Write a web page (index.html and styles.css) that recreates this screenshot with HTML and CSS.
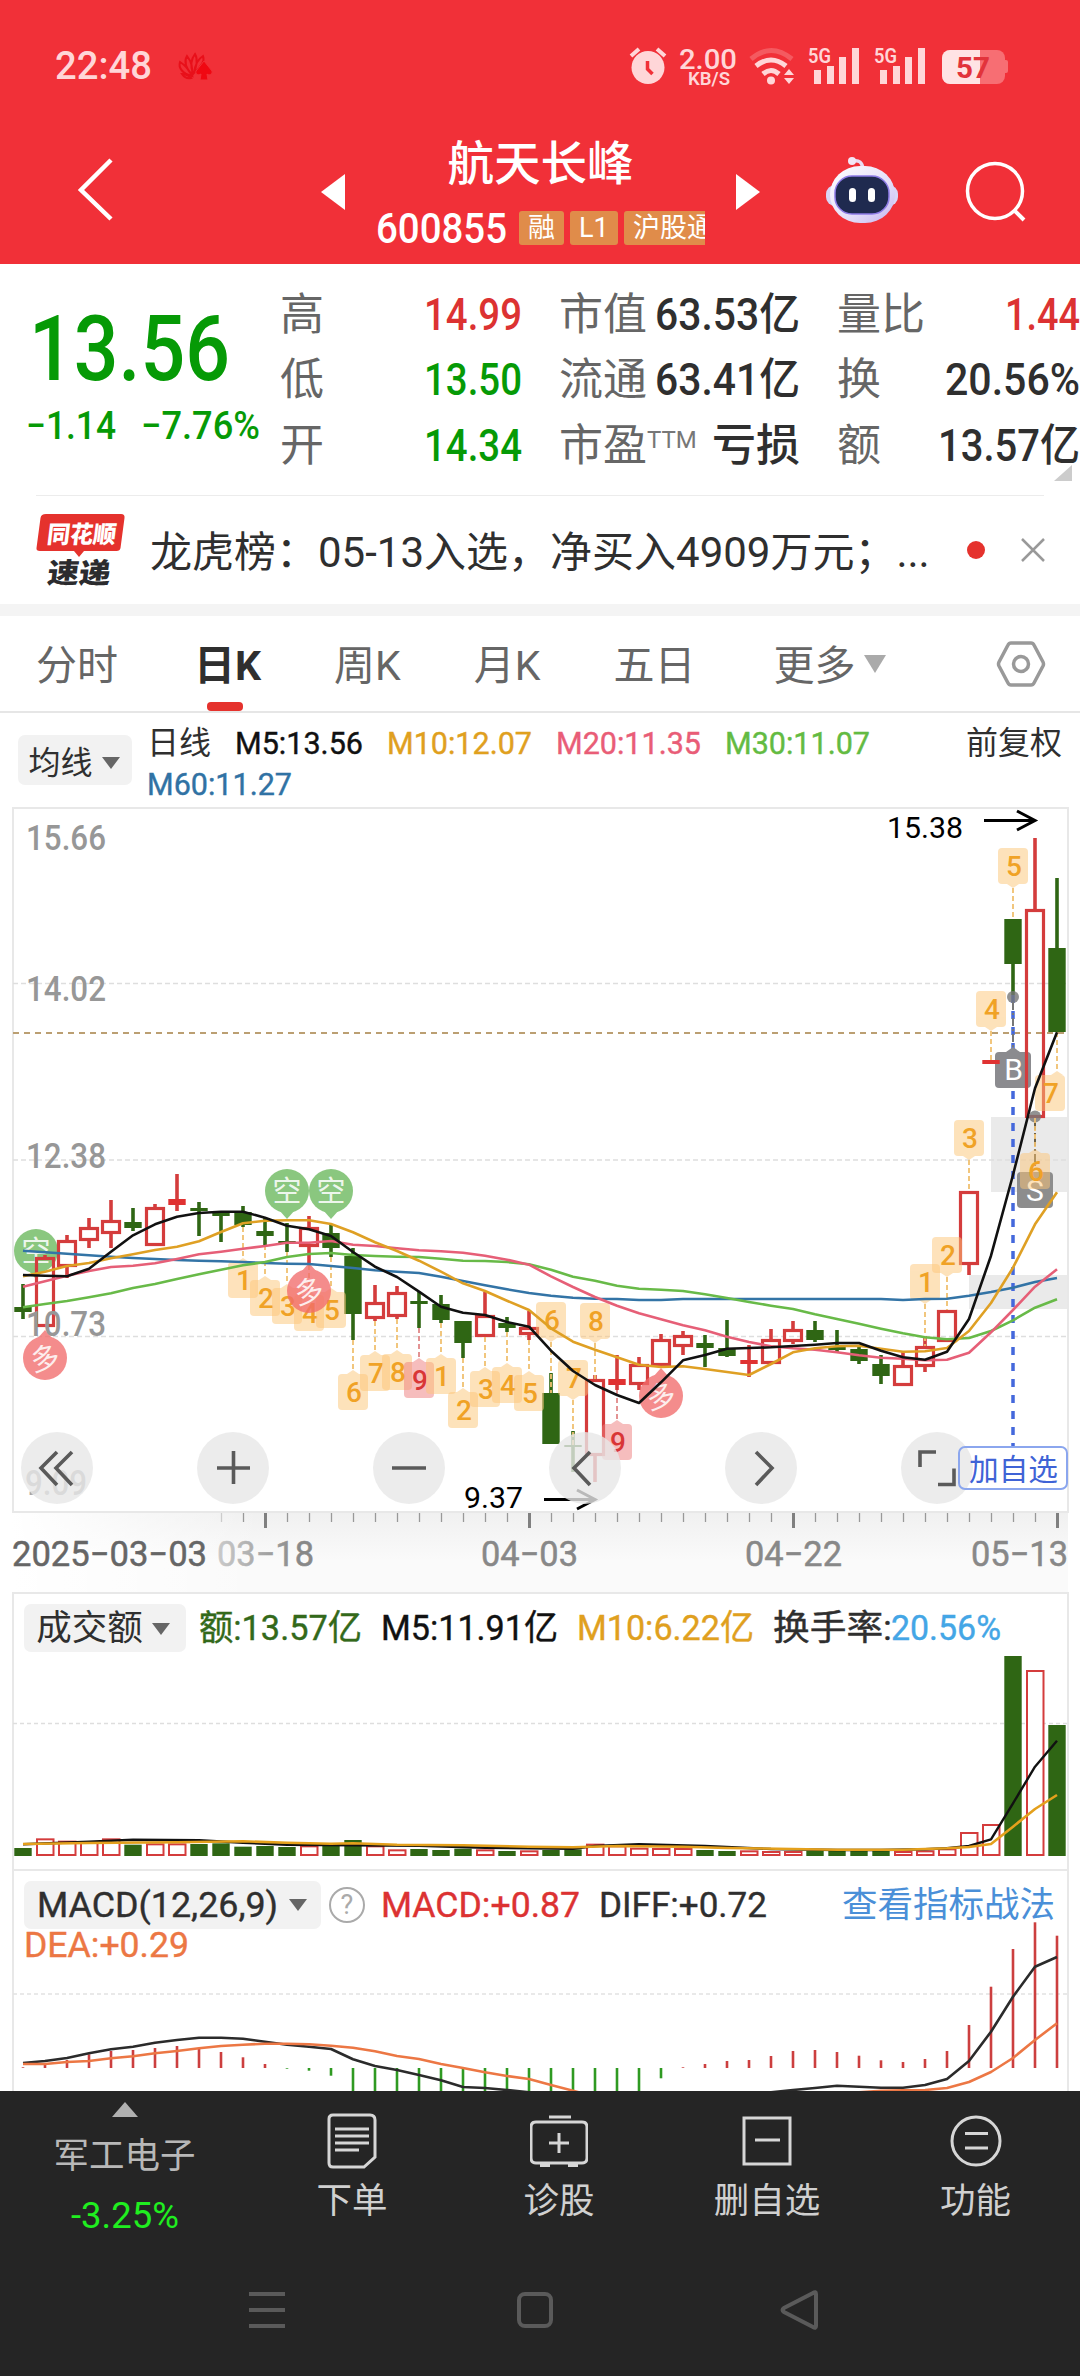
FILE: index.html
```html
<!DOCTYPE html>
<html lang="zh-CN">
<head>
<meta charset="utf-8">
<title>航天长峰 600855</title>
<link rel="stylesheet" href="styles.css">
</head>
<body>
<header class="header">
  <div class="status">
    <span class="n time" data-w="97">22:48</span>
    <svg class="brand" width="36" height="30" viewBox="0 0 36 30"><g fill="none" stroke="#e8101a" stroke-width="2"><path d="M15 25C6 23 1 17 3 11c5 3 9 8 12 14zM15 24C8 16 7 10 10 5c4 5 6 11 5 19zM16 23c-3-9-2-15 2-20 3 5 2 13-2 20zM17 22c1-8 4-14 9-17 2 5-2 11-9 17z"/><path d="M14 27c-4 1-7-1-9-4 4 0 6 1 9 4z"/></g><path d="M27 10l8 10c1 3-3 5-5 3l1 6h-8l1-6c-3 2-6 0-5-3z" fill="#f00812" stroke="#f13038"/></svg>
    <svg class="sys" width="400" height="44" viewBox="620 42 400 44">
      <g fill="#ffd6d8" stroke="none">
        <circle cx="648" cy="65.500" r="16.500"/>
        <path d="M647.500 59v8l5 5" fill="none" stroke="#f13038" stroke-width="3.500"/>
        <path d="M631 54l8-7M665 54l-8-7" stroke="#ffd6d8" stroke-width="4"/>
        <text x="679" y="67" font-size="28" font-weight="500" textLength="58" lengthAdjust="spacingAndGlyphs">2.00</text>
        <text x="688" y="83" font-size="19" font-weight="600" textLength="42" lengthAdjust="spacingAndGlyphs">KB/S</text>
        <g fill="none" stroke="#ffd6d8" stroke-width="5">
          <path d="M751 57q20-17 41 0" opacity=".25"/><path d="M756 64q15-12 30 0"/><path d="M763 72q8-7 16 0"/>
        </g>
        <circle cx="771" cy="78.500" r="4"/><path d="M789 67l5 6h-10zM789 82l5-6h-10z"/>
        <text x="808" y="61" font-size="21" font-weight="600" textLength="23" lengthAdjust="spacingAndGlyphs">5G</text>
        <path d="M814 68h7v14h-7zM827 64h7v18h-7zM839 55h7v27h-7zM852 46h7v36h-7z"/>
        <text x="874" y="61" font-size="21" font-weight="600" textLength="23" lengthAdjust="spacingAndGlyphs">5G</text>
        <path d="M880 68h7v14h-7zM893 64h7v18h-7zM905 55h7v27h-7zM918 46h7v36h-7z"/>
      </g>
      <rect x="942" y="48" width="63" height="34" rx="8" fill="#f76e73"/><rect x="1003" y="58" width="5" height="13" rx="2" fill="#f76e73"/>
      <path d="M950 48h30v34h-30a8 8 0 0 1-8-8V56a8 8 0 0 1 8-8z" fill="#ffe3e4"/>
      <text x="956" y="76" font-size="29" font-weight="700" fill="#e2333b" textLength="34" lengthAdjust="spacingAndGlyphs">57</text>
    </svg>
  </div>
  <div class="titlebar">
    <svg class="back" width="40" height="66" viewBox="0 0 40 66"><path d="M34 3L4 33l30 29" fill="none" stroke="#fff" stroke-width="4.500"/></svg>
    <svg width="24" height="36" viewBox="0 0 24 36"><path d="M24 0v36L0 18z" fill="#fff"/></svg>
    <div class="stock">
      <h1>航天长峰</h1>
      <div class="codes"><span class="n code" data-w="131">600855</span><em>融</em><em>L1</em><em>沪股通</em></div>
    </div>
    <svg width="24" height="36" viewBox="0 0 24 36"><path d="M0 0v36l24-18z" fill="#fff"/></svg>
    <svg class="robot" width="74" height="68" viewBox="824 155 74 68">
      <defs><linearGradient id="skin" x2="1" y2="1"><stop offset="0" stop-color="#fff"/><stop offset=".6" stop-color="#e4def8"/><stop offset="1" stop-color="#c4b4f0"/></linearGradient></defs>
      <path d="M852 160q9-2 10 8" fill="none" stroke="#e9dcf3" stroke-width="3.500"/><circle cx="851" cy="160" r="4" fill="#f3e6f6"/>
      <rect x="825" y="184" width="72" height="21" rx="9" fill="#d9d5f6"/>
      <rect x="829" y="165" width="65" height="57" rx="30" fill="url(#skin)"/>
      <rect x="834" y="175" width="54" height="38" rx="17" fill="#1f2a4f" stroke="#8d7be6" stroke-width="1.500"/>
      <rect x="848" y="187" width="7" height="14" rx="3.500" fill="#fff"/><rect x="867" y="187" width="7" height="14" rx="3.500" fill="#fff"/>
    </svg>
    <svg width="62" height="62" viewBox="0 0 62 62"><circle cx="30" cy="30" r="27.500" fill="none" stroke="#fff" stroke-width="3.500"/><path d="M49 49l10 10" stroke="#fff" stroke-width="4"/></svg>
  </div>
</header>

<section class="quote">
  <div class="price">
    <span class="n last" data-w="201">13.56</span>
    <div class="chg"><span class="n" data-w="90">−1.14</span><span class="n" data-w="119">−7.76%</span></div>
  </div>
  <dl class="c1">
    <dt>高</dt><dd class="red"><span class="n" data-w="98">14.99</span></dd>
    <dt>低</dt><dd class="green"><span class="n" data-w="98">13.50</span></dd>
    <dt>开</dt><dd class="green"><span class="n" data-w="98">14.34</span></dd>
  </dl>
  <dl class="c2">
    <dt>市值</dt><dd><span class="n" data-w="145">63.53亿</span></dd>
    <dt>流通</dt><dd><span class="n" data-w="145">63.41亿</span></dd>
    <dt>市盈<sup>TTM</sup></dt><dd>亏损</dd>
  </dl>
  <dl class="c3">
    <dt>量比</dt><dd class="red"><span class="n" data-w="75">1.44</span></dd>
    <dt>换</dt><dd><span class="n" data-w="135">20.56%</span></dd>
    <dt>额</dt><dd><span class="n" data-w="142">13.57亿</span></dd>
  </dl>
  <i class="corner"></i>
</section>

<section class="news">
  <svg width="90" height="76" viewBox="36 512 90 76">
    <path d="M46 514h75q4 0 3.500 4l-4 30q-.5 3-4 3H84l-5 6-5-6H40q-4 0-3.500-3l4-30q.5-4 5.500-4z" fill="#e5322d"/>
    <g transform="skewX(-7)" font-weight="900"><text x="113" y="543" font-size="24" fill="#fff" textLength="69" lengthAdjust="spacingAndGlyphs">同花顺</text>
    <text x="118" y="583" font-size="28" fill="#2b2b2e" textLength="63" lengthAdjust="spacingAndGlyphs">速递</text></g>
  </svg>
  <p>龙虎榜：05-13入选，净买入4909万元；<span>...</span></p>
  <i class="dot"></i>
  <svg width="26" height="26" viewBox="0 0 26 26"><path d="M2 2l22 22M24 2L2 24" stroke="#999" stroke-width="2.500"/></svg>
</section>

<nav class="tabs">
  <span>分时</span><span class="on">日K</span><span>周K</span><span>月K</span><span>五日</span><span class="more">更多<i class="tri"></i></span>
  <svg width="50" height="48" viewBox="0 0 50 48"><path d="M15 3h20q2 0 3 2l9 17q1 2 0 4l-9 17q-1 2-3 2H15q-2 0-3-2L3 26q-1-2 0-4l9-17q1-2 3-2z" fill="none" stroke="#999" stroke-width="3.500"/><circle cx="25" cy="24" r="7.500" fill="none" stroke="#999" stroke-width="3.500"/></svg>
</nav>

<section class="ma">
  <button class="pick">均线<i class="tri"></i></button>
  <div class="legend">
    <span>日线</span><span class="n k" data-w="128">M5:13.56</span><span class="n y" data-w="145">M10:12.07</span><span class="n p" data-w="145">M20:11.35</span><span class="n g" data-w="145">M30:11.07</span><span class="n b" data-w="145">M60:11.27</span>
  </div>
  <span class="adj">前复权</span>
</section>

<svg id="kline" width="1080" height="786" viewBox="0 806 1080 786"></svg>

<section class="panel volume">
  <svg id="volume" width="1080" height="277" viewBox="0 1592 1080 277"></svg>
  <div class="legend">
    <button class="pick">成交额<i class="tri"></i></button>
    <span class="n dg" data-w="163">额:13.57亿</span><span class="n k" data-w="177">M5:11.91亿</span><span class="n y" data-w="177">M10:6.22亿</span><span class="n" data-w="119">换手率:</span><span class="n sky" data-w="110">20.56%</span>
  </div>
</section>

<section class="panel macd">
  <svg id="macd" width="1080" height="222" viewBox="0 1869 1080 222"></svg>
  <div class="legend">
    <button class="pick"><span class="n" data-w="241">MACD(12,26,9)</span><i class="tri"></i></button>
    <i class="help">?</i>
    <span class="n red" data-w="199">MACD:+0.87</span><span class="n" data-w="168">DIFF:+0.72</span><a>查看指标战法</a><span class="n o" data-w="165">DEA:+0.29</span>
  </div>
</section>

<footer>
  <div class="nav">
    <div class="sector"><i class="up"></i><span>军工电子</span><b class="n" data-w="108">-3.25%</b></div>
    <div><svg width="50" height="56" viewBox="0 0 50 56"><path d="M6 2h37q5 0 5 5v37l-11 10H6q-4 0-4-4V6q0-4 4-4zM8 16h34M8 23h34M8 30h34M8 37h24"/></svg><span>下单</span></div>
    <div><svg width="58" height="56" viewBox="0 0 58 56"><path d="M6 9h46q5 0 5 5v31q0 5-5 5H6q-5 0-5-5V14q0-5 5-5zM19 4h22M29 20v20M19 30h20M10 52.500h10M38 52.500h10"/></svg><span>诊股</span></div>
    <div><svg width="50" height="56" viewBox="0 0 50 56"><path d="M2 5h46v46H2zM13 27h25"/></svg><span>删自选</span></div>
    <div><svg width="52" height="56" viewBox="0 0 52 56"><circle cx="26" cy="28" r="24"/><path d="M15 20.500h23M15 35h23"/></svg><span>功能</span></div>
  </div>
  <div class="keys">
    <svg width="36" height="36" viewBox="0 0 36 36"><path d="M0 2h36M0 18h36M0 34h36"/></svg>
    <svg width="36" height="36" viewBox="0 0 36 36"><rect x="2" y="2" width="32" height="32" rx="6"/></svg>
    <svg width="38" height="40" viewBox="0 0 38 40"><path d="M36 4v32q0 3-3 1L4 22q-3-2 0-4L33 3q3-2 3 1z"/></svg>
  </div>
</footer>
<script src="charts.js"></script>
</body>
</html>
```
FILE: styles.css
```css
* { box-sizing: border-box; }
body { margin: 0; width: 1080px; height: 2376px; overflow: hidden; background: #fff; color: #2f2f2f;
  font-family: Roboto, "Noto Sans CJK SC", sans-serif; }
svg { display: block; flex: none; }
i, em { font-style: normal; }
button { border: 0; padding: 0; font: inherit; color: inherit; }
.n { display: inline-block; flex: none; white-space: nowrap; transform-origin: 0 50%; font-weight: 500; }
.red { color: #dc3232; } .green { color: #069a06; }
.k { color: #111; } .y { color: #e0a01e; } .p { color: #e95d77; } .g { color: #63bb42; }
.b { color: #3072a4; } .dg { color: #33691a; } .sky { color: #44a6e6; } .o { color: #ec7744; }

.header { height: 264px; background: #f13038; color: #fff; }
.status { height: 130px; padding: 2px 60px 0 55px; display: flex; align-items: center; }
.time { font-size: 38px; color: #ffd6d8; }
.brand { margin-left: 25px; }
.sys { margin-left: auto; }
.titlebar { height: 134px; display: grid; align-items: center;
  grid-template-columns: 244px 55px 360px 89px 140px 62px; grid-template-rows: 124px; padding: 0 0 0 77px; }
.back { margin-bottom: 5px; }
.robot { margin-bottom: 4px; }
.stock { width: 329px; overflow: hidden; height: 134px; padding-top: 11px; align-self: start; }
.stock h1 { margin: 0; font-size: 46.500px; line-height: 46px; font-weight: 500; text-align: center; height: 68px; }
.codes { display: flex; align-items: center; height: 38px; width: 380px; }
.code { font-size: 42px; margin-right: 12px; }
.codes em { height: 34px; line-height: 34px; margin-right: 6px; padding: 0 9px; border-radius: 3px; background: #e08c4a; font-size: 27px; }
.codes em:nth-of-type(2) { width: 48px; }

.quote { height: 232px; margin: 0 0 0 26px; display: grid; grid-template-columns: 254px 279px 278px 243px; position: relative; }
.quote::after { content: ""; position: absolute; left: 10px; right: 36px; bottom: 0; height: 1px; background: #ececec; }
.price { color: #069a06; padding-top: 37px; }
.last { font-size: 91px; line-height: 96px; margin-left: 3px; }
.chg { display: flex; gap: 25px; font-size: 39px; line-height: 56px; padding-top: 1px; }
.quote dl { margin: 0; padding-top: 18px; display: grid; grid-template-columns: 88px 1fr; grid-auto-rows: 65.300px; line-height: 66px; font-size: 44px; }
.quote dt { color: #666; white-space: nowrap; }
.quote dd { margin: 0; text-align: right; font-weight: 500; display: flex; justify-content: flex-end; white-space: nowrap; }
.c1 { width: 242px; } .c2 { width: 241px; } .c3 { width: 243px; }
.quote sup { font-size: 24px; vertical-align: 13px; line-height: 0; color: #777; }
.corner { position: absolute; right: 8px; bottom: 15px; border: solid transparent; border-width: 0 0 16px 18px; border-bottom-color: #ccc; }

.news { height: 108px; padding: 0 34px 0 36px; display: flex; align-items: center; }
.news p { margin: 0 0 4px 24px; font-size: 42px; white-space: nowrap; width: 800px; }
.dot { width: 18px; height: 18px; border-radius: 9px; background: #e5322d; margin: 0 auto 0 17px; }

.tabs { height: 109px; border-top: 12px solid #f4f4f4; border-bottom: 2px solid #e6e6e6; padding: 0 34px 0 36px; display: flex; align-items: center; font-size: 41px; color: #666; }
.tabs span { height: 95px; line-height: 100px; margin-right: 73px; white-space: nowrap; }
.tabs .on { color: #2f2f2f; font-weight: 700; position: relative; margin-left: 3px; }
.on::after { content: ""; position: absolute; left: 13px; bottom: 0; width: 36px; height: 9px; border-radius: 4px; background: #e5322d; }
.tri { display: inline-block; border: solid transparent; border-width: 12px 9px 0; border-top-color: #666; margin-left: 10px; vertical-align: 5px; }
.tabs .more { margin-left: 5px; margin-right: auto; }
.more .tri { border-width: 18px 11px 0; border-top-color: #aaa; vertical-align: 7px; margin-left: 8px; }

.ma { height: 93px; padding: 10px 18px 0 18px; display: flex; align-items: flex-start; font-size: 32px; }
.pick { background: #f2f2f2; border-radius: 7px; white-space: nowrap; flex: none; }
.ma .pick { width: 114px; height: 50px; margin-top: 12px; padding-right: 2px; }
.ma .pick .tri { margin-left: 9px; }
.ma .legend { display: flex; flex-wrap: wrap; width: 760px; margin-left: 15px; column-gap: 24px; line-height: 41px; }
.legend .n { font-weight: 400; -webkit-text-stroke: .4px currentColor; }
.adj { margin-left: auto; line-height: 41px; }

.panel { display: grid; }
.panel > * { grid-area: 1 / 1; }
.panel .legend { display: flex; flex-wrap: wrap; align-content: flex-start; padding: 12px 25px 0 24px; font-size: 35.500px; line-height: 48px; }
.panel .pick { height: 48px; line-height: 48px; padding: 0 12px; }
.volume .pick { width: 162px; margin-right: 13px; }
.panel.volume .pick { padding: 0 14px 0 10px; }
.volume .pick .tri { margin-left: 9px; }
.volume .n { margin-right: 19px; }
.volume .n:nth-of-type(4) { margin-right: -1px; }
.macd .pick { width: 297px; display: flex; align-items: center; }
.macd .pick .tri { margin-left: 12px; }
.macd .n { margin-right: 19px; }
.macd .pick .n { margin-right: 0; }
.macd .o { line-height: 32px; }
.macd a { color: #4a8fd8; margin-left: auto; }
.help { width: 36px; height: 36px; line-height: 32px; margin: 6px 16px 0 8px; border: 2px solid #aaa; border-radius: 50%; color: #aaa; font-size: 27px; text-align: center; }

footer { height: 285px; background: #252525; color: #d0d0d0; font-size: 35.500px; }
.nav { display: grid; grid-template-columns: 249px 206px 208px 208px 209px; height: 160px; }
.nav > div { display: flex; flex-direction: column; align-items: center; padding-top: 22px; white-space: nowrap; }
.nav svg { fill: none; stroke: #d6d6d6; stroke-width: 3; }
.nav span { margin-top: 11px; line-height: 42px; }
.nav .sector { padding-top: 11px; color: #b8b8b8; }
.sector .up { border: solid transparent; border-width: 0 13px 15px; border-bottom-color: #b0b0b0; }
.nav .sector span { margin-top: 18px; }
.sector b.n { color: #20ee20; font-weight: 400; margin-top: 18px; line-height: 42px; font-size: 36px; }
.keys { display: flex; padding: 39px 0 0 249px; align-items: center; }
.keys svg { margin-right: 230px; fill: none; stroke: #5a5a5a; stroke-width: 4; }
.keys svg:first-child { margin-right: 232px; }
.keys svg:nth-child(2) { margin-right: 227px; }

svg text { font-family: Roboto, "Noto Sans CJK SC", sans-serif; }
```
FILE: charts.js
```js
// Squeeze numerals to the narrow width used by the quote face.
document.querySelectorAll('.n').forEach(function (el) {
  var w = +el.dataset.w, natural = el.getBoundingClientRect().width;
  el.style.transform = 'scaleX(' + (w / natural).toFixed(4) + ')';
  el.style.width = w + 'px';
});

var RED = '#d43c3c', GREEN = '#2f6614';
function X(i) { return 23 + 22 * i; }
function line(x1, y1, x2, y2, c, w, more) {
  return '<path d="M' + x1 + ' ' + y1 + 'L' + x2 + ' ' + y2 + '" fill="none" stroke="' + c + '" stroke-width="' + w + '" ' + (more || '') + '/>';
}
function rect(x, y, w, h, fill, more) {
  return '<rect x="' + x + '" y="' + y + '" width="' + w + '" height="' + h + '" fill="' + fill + '" ' + (more || '') + '/>';
}
function text(s, x, y, size, w, fill, more) {
  return '<text x="' + x + '" y="' + y + '" font-size="' + size + '" textLength="' + w + '" lengthAdjust="spacingAndGlyphs" fill="' + fill + '" ' + (more || '') + '>' + s + '</text>';
}
// Series points are in thirds of a pixel below a base line.
function curve(base, pts, c, w) {
  var d = pts.map(function (p, k) { return (k ? 'L' : 'M') + X(p[0]) + ' ' + (base + p[1] / 3).toFixed(1); }).join('');
  return '<path d="' + d + '" fill="none" stroke="' + c + '" stroke-width="' + w + '" stroke-linejoin="round"/>';
}
function seq(a, from) { return a.map(function (v, k) { return [k + (from || 0), v]; }); }

// [type, high, top, bottom, low]; s = solid red
var C = [
  ['g',1284,1307,1312,1319],['r',1255,1257,1327,1327],['r',1235,1240,1267,1278],['r',1218,1227,1241,1248],['r',1200,1220,1234,1248],
  ['g',1208,1222,1228,1231],['r',1204,1207,1246,1246],['s',1174,1199,1205,1211],['g',1202,1208,1211,1236],['g',1212,1213,1216,1242],
  ['g',1206,1212,1225,1227],['g',1218,1231,1236,1245],['g',1223,1241,1243,1252],['r',1216,1227,1247,1265],['g',1225,1233,1248,1257],
  ['g',1248,1256,1314,1340],['r',1285,1302,1319,1321],['r',1286,1292,1317,1319],['g',1292,1301,1304,1328],['g',1295,1304,1320,1323],
  ['g',1321,1321,1343,1358],['r',1292,1315,1337,1337],['g',1317,1323,1328,1332],['r',1311,1327,1335,1340],['g',1373,1393,1444,1444],
  ['g',1431,1445,1447,1472],['r',1375,1379,1456,1482],['s',1355,1379,1385,1390],['r',1357,1364,1385,1390],['r',1334,1339,1366,1366],
  ['r',1331,1335,1347,1355],['g',1335,1343,1348,1367],['g',1320,1348,1356,1357],['s',1345,1360,1364,1377],['r',1329,1339,1364,1364],
  ['r',1321,1329,1342,1344],['g',1321,1330,1340,1342],['g',1330,1346,1350,1353],['g',1347,1349,1361,1364],['g',1355,1364,1376,1384],
  ['r',1352,1365,1386,1386],['r',1336,1346,1367,1372],['r',1310,1310,1342,1342],['r',1191,1191,1265,1275],['s',1060,1060,1064,1064],
  ['g',919,919,964,995],['r',838,909,1118,1118],['g',878,948,1032,1032]
];
function tag(i, tip, up, s, hot, dx) {
  var x = X(i) + (dx || 0), t = X(i), top = up ? tip + 4 : tip - 40, c = hot ? '#d93636' : '#f0a226', bg = hot ? '#ee7d7d' : '#fdc678';
  var e = up ? top : top + 36, k = up ? -4 : 4;
  var edge = up ? C[i][4] : C[i][2];
  return line(t, up ? edge : tip, t, up ? tip : edge, hot ? '#e08888' : '#f0c070', 1.8, 'stroke-dasharray="5 3"') +
    '<g fill="' + bg + '" opacity=".5">' + rect(x - 15, top, 30, 36, bg, 'rx="4"') + '<path d="M' + (t - 6) + ' ' + e + 'l6 ' + k + 'l6 ' + -k + 'z"/></g>' +
    '<text x="' + (x + 1) + '" y="' + (top + 28) + '" font-size="28" font-weight="500" text-anchor="middle" fill="' + c + '">' + s + '</text>';
}
function pin(x, y, s, fill, dir, tilt) {
  return '<g opacity=".78" fill="' + fill + '"><circle cx="' + x + '" cy="' + y + '" r="22"/><path d="M' + (x - 8) + ' ' + (y + dir * 19) + 'L' + x + ' ' + (y + dir * 28) + 'L' + (x + 8) + ' ' + (y + dir * 19) + 'z"/></g>' +
    '<text x="' + x + '" y="' + (y + 11) + '" font-size="29" fill="#fff" opacity=".85" text-anchor="middle" transform="rotate(' + tilt + ' ' + x + ' ' + y + ')">' + s + '</text>';
}

var k = '<defs><linearGradient id="ax" x2="0" y2="1"><stop offset="0" stop-color="#f0f0f0"/><stop offset=".6" stop-color="#fafafa"/><stop offset="1" stop-color="#fafafa"/></linearGradient>' +
  '<linearGradient id="fade"><stop offset="0" stop-color="#fff"/><stop offset="1" stop-color="#fff" stop-opacity="0"/></linearGradient>' +
  '<linearGradient id="dim" gradientUnits="userSpaceOnUse" x1="215" x2="300" y1="0" y2="0"><stop offset="0" stop-color="#ccc"/><stop offset="1" stop-color="#888"/></linearGradient></defs>';
k += rect(12, 1512, 1056, 80, 'url(#ax)') + rect(12, 1512, 250, 80, 'url(#fade)');
k += rect(991, 1117, 77, 75, '#eaeaea') + rect(969, 1275, 99, 34, '#eaeaea');
k += rect(13, 808, 1055, 704, 'none', 'stroke="#e8e8e8" stroke-width="2"');
[983.5, 1160, 1336.5].forEach(function (y) { k += line(13, y, 1068, y, '#dedede', 1.5, 'stroke-dasharray="5 3"'); });
k += line(13, 1033, 1068, 1033, '#bb9f72', 2, 'stroke-dasharray="6 5"');
k += pin(36, 1251, '空', '#6ab85c', 1, 0) + pin(287, 1191, '空', '#6ab85c', 1, 0) + pin(331, 1191, '空', '#6ab85c', 1, 0);
k += line(1013, 995, 1013, 1447, '#4468dc', 3.5, 'stroke-dasharray="8 8"');
k += rect(995, 1052, 36, 36, '#8b8b8f', 'rx="4"') + '<path d="M1006 1052l7-5 7 5z" fill="#8b8b8f"/>' + rect(1017, 1172, 36, 36, '#8d8d8d', 'rx="4"');
C.forEach(function (c, i) {
  var x = X(i), col = c[0] == 'g' ? GREEN : RED;
  if (c[2] > c[1]) k += line(x, c[1], x, c[2], col, 3.6);
  if (c[4] > c[3]) k += line(x, c[3], x, c[4], col, 3.6);
  if (c[0] == 'r') k += rect(x - 8.5, c[2] + 1.5, 17, Math.max(c[3] - c[2] - 3, 1), 'none', 'stroke="' + RED + '" stroke-width="3.2"');
  else k += rect(x - 8.7, c[2], 17.4, c[3] - c[2], c[0] == 's' ? '#e03232' : GREEN);
});
k += pin(45, 1358, '多', '#f26c6c', -1, -12) + pin(661, 1396, '多', '#f26c6c', -1, -12);
[[15.66,850],[14.02,1001],[12.38,1168],[10.73,1336]].forEach(function (l) { k += text(l[0].toFixed(2), 26, l[1], 35, 80, '#979797', 'font-weight="500"'); });
[[10,1258,1],[11,1276,2],[12,1284,3],[13,1291,4],[14,1288,5],[15,1370,6],[16,1351,7],[17,1350,8],[18,1358,9,1],[19,1354,1],[20,1388,2],[21,1367,3],[22,1363,4],[23,1371,5],[27,1420,9,1]]
  .forEach(function (t) { k += tag(t[0], t[1], true, t[2], t[3]); });
k += tag(47, 1071, true, 7, 0, -7);
k += pin(309, 1291, '多', '#f26c6c', -1, -12);
[[24,1342,6],[26,1343,8],[25,1400,7],[41,1304,1],[42,1277,2],[43,1160,3],[44,1031,4],[45,888,5]].forEach(function (t) { k += tag(t[0], t[1], false, t[2]); });
k += curve(1140, seq([332,337,341,346,350,354,357,360,362,364,366,369,371,372,378,384,391,395,399,410,423,436,448,459,467,473,476,477,480,480,477,477,477,477,477,477,477,477,477,477,480,477,476,467,456,443,426,414]), '#3374a6', 2.6);
k += curve(1140, seq([502,492,483,472,460,444,432,417,403,389,376,366,351,342,339,345,348,350,351,356,362,363,366,373,389,410,422,437,446,449,453,463,474,486,497,507,523,537,551,566,580,592,598,594,573,541,503,478]), '#68ba48', 2.6);
k += curve(1140, seq([440,424,407,393,381,377,370,357,343,335,326,318,308,308,303,314,318,325,331,334,338,347,359,374,409,441,471,497,520,538,556,571,590,606,619,625,629,637,646,653,656,661,659,638,577,510,440,388]), '#e65f77', 2.6);
k += curve(1140, seq([409,395,378,369,355,343,330,320,304,276,250,242,241,241,252,277,307,333,362,395,430,453,482,510,565,605,629,652,674,681,679,687,696,705,672,637,625,619,617,626,635,634,624,573,489,383,253,157]), '#dfa024', 2.6);
k += curve(1140, seq([405,407,409,386,335,286,253,230,219,215,215,233,257,268,288,336,380,411,455,500,518,525,546,560,632,693,735,765,789,727,661,645,626,624,622,618,614,609,609,632,652,659,635,537,347,105,-155,-323]), '#111', 2.6);
k += '<g fill="#777" opacity=".8"><circle cx="1013" cy="997" r="6"/><circle cx="1035" cy="1116.500" r="6"/></g>';
k += line(1013, 1002, 1013, 1047, '#777', 2, 'stroke-dasharray="8 3 2 3"') + line(1035, 1122, 1035, 1166, '#6b6048', 2, 'stroke-dasharray="8 3 2 3"');
k += '<text x="1013.500" y="1080" font-size="30" text-anchor="middle" fill="#fff">B</text><text x="1035" y="1201" font-size="30" text-anchor="middle" fill="#fff">S</text>';
k += tag(46, 1149, true, 6);
k += text('15.38', 887, 838, 29.5, 76, '#000') + text('9.37', 464, 1508, 29.5, 59, '#000');
k += '<g fill="none" stroke="#000" stroke-width="3"><path d="M984 820.500h50M1017 811l18 9.500-18 9.500"/><path d="M544 1499.500h50M577 1490l18 9.500-18 9.500"/></g>';
k += text('9.09', 25, 1495, 35, 62, '#a5a5a5', 'font-weight="500"');
[57, 233, 409, 585, 761, 937].forEach(function (x) { k += '<circle cx="' + x + '" cy="1468" r="36" fill="#e7e7e7" opacity=".8"/>'; });
k += '<g fill="none" stroke="#5a5a5a" stroke-width="3.600"><path d="M57 1452l-16 16 16 17M72 1452l-16 16 16 17"/><path d="M217 1468h33M233.500 1451v33"/><path d="M392 1468h34"/><path d="M590 1452l-16 16 16 17"/><path d="M756 1452l16 16-16 17"/><path d="M920 1467v-15h16M938 1484.500h16v-16"/></g>';
k += rect(959, 1447, 108, 42, 'none', 'rx="6" stroke="#8ba6ee" stroke-width="2"') + text('加自选', 969, 1480, 29.5, 89, '#3f63d6');
for (var i = 9; i < 48; i++) {
  var big = i == 11 || i == 23 || i == 35 || i == 47;
  k += line(X(i) + .5, 1513, X(i) + .5, big ? 1528 : 1522, big ? '#808080' : i == 9 ? '#ccc' : '#999', big ? 3 : 1.3);
}
[['2025−03−03',12,195,'#666'],['03−18',217,97,'url(#dim)'],['04−03',481,97,'#888'],['04−22',745,97,'#888'],['05−13',971,97,'#888']].forEach(function (d) { k += text(d[0], d[1], 1566, 35, d[2], d[3], 'stroke="' + d[3] + '" stroke-width=".5"'); });
document.getElementById('kline').innerHTML = k;

// Turnover bars
var V = [834,805,812,815,805,824,820,820,822,820,830,828,831,826,825,810,826,838,837,840,836,838,843,841,840,838,821,826,833,834,834,840,843,841,843,843,842,842,842,842,843,841,835,786,762,258,300,465];
var v = rect(13, 1593, 1055, 290, 'none', 'stroke="#e8e8e8" stroke-width="2"') + line(13, 1723.5, 1068, 1723.5, '#dedede', 1.5, 'stroke-dasharray="4 3"');
V.forEach(function (t, i) {
  var y = 1570 + t / 3, h = 1856 - y;
  v += C[i][0] == 'g' ? rect(X(i) - 8.7, y, 17.4, h, GREEN) : rect(X(i) - 8, y + 1, 16.5, h - 2, '#fff', 'stroke="' + RED + '" stroke-width="2"');
});
v += curve(1570, [[0,823],[3,815],[5,809],[8,811],[10,818],[12,824],[15,826],[18,827],[21,833],[25,836],[26,828],[28,823],[31,828],[34,837],[37,840],[39,840],[41,838],[42,835],[43,828],[44,808],[45,700],[46,590],[47,512]], '#111', 2.4);
v += curve(1570, [[0,822],[3,819],[7,817],[10,814],[12,818],[14,821],[15,820],[17,824],[20,826],[23,830],[25,832],[27,828],[30,830],[32,834],[37,839],[40,839],[42,835],[43,831],[44,822],[45,770],[46,717],[47,675]], '#e4a01c', 2.6);
document.getElementById('volume').innerHTML = v;

// MACD histogram and lines
var M = [622,613,600,583,573,570,564,558,565,576,592,612,626,632,647,700,700,700,700,700,700,700,700,700,700,700,700,700,700,655,622,612,603,600,588,573,570,576,587,601,606,597,573,495,380,267,187,227];
var m = rect(13, 1870, 1055, 290, 'none', 'stroke="#e8e8e8" stroke-width="2"') + line(13, 1994, 1068, 1994, '#e2e2e2', 1.5, 'stroke-dasharray="4 3"');
M.forEach(function (t, i) { m += line(X(i), 2068, X(i), (1860 + t / 3).toFixed(1), t > 625 ? '#2f9a22' : '#cc3f3f', 2.6); });
m += curve(1860, seq([609,603,594,580,568,560,548,540,533,533,536,545,554,560,567,598,618,630,645,661,681,684,690,697,720]), '#2b2b2b', 2.6) + curve(1860, seq([697,690,684,677,680,683,683,675,657,603,515,410,320,291], 34), '#2b2b2b', 2.6);
m += curve(1860, seq([612,612,606,603,595,589,580,573,565,558,554,551,551,553,557,563,574,588,597,612,624,637,648,657,675,692,710]), '#ec7744', 2.6) + curve(1860, seq([697,692,691,690,684,666,636,594,540,490], 38), '#ec7744', 2.6);
document.getElementById('macd').innerHTML = m;
```
